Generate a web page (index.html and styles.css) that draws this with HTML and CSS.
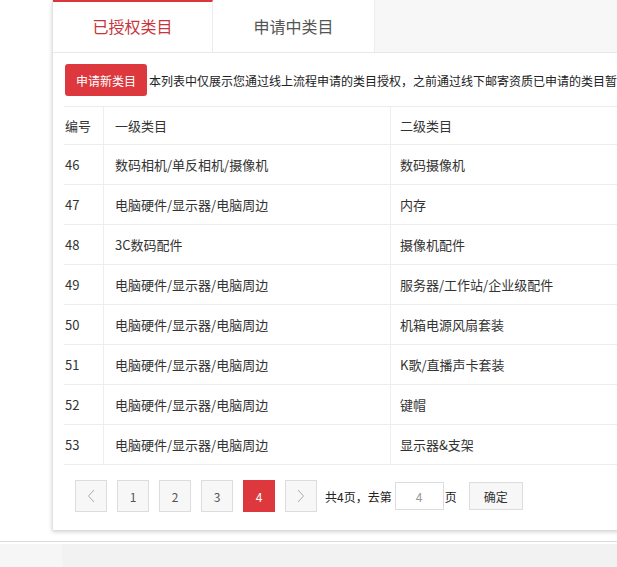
FILE: index.html
```html
<!DOCTYPE html>
<html lang="zh-CN">
<head>
    <meta charset="UTF-8">
    <title>已授权类目</title>
    <link rel="stylesheet" href="styles.css">
</head>
<body>

<div class="page">
    <div class="panel">
        <!-- Onglets -->
        <div class="tabs">
            <div class="tab active">已授权类目</div>
            <div class="tab">申请中类目</div>
            <div class="tab-fill"></div>
        </div>

        <div class="toolbar">
            <button class="btn-red">申请新类目</button>
            <span class="notice">本列表中仅展示您通过线上流程申请的类目授权，之前通过线下邮寄资质已申请的类目暂不在此展示</span>
        </div>

        <table class="cat-table">
            <thead>
                <tr>
                    <th class="col-id">编号</th>
                    <th class="col-first">一级类目</th>
                    <th class="col-second">二级类目</th>
                </tr>
            </thead>
            <tbody>
                <tr><td class="col-id">46</td><td class="col-first">数码相机/单反相机/摄像机</td><td class="col-second">数码摄像机</td></tr>
                <tr><td class="col-id">47</td><td class="col-first">电脑硬件/显示器/电脑周边</td><td class="col-second">内存</td></tr>
                <tr><td class="col-id">48</td><td class="col-first">3C数码配件</td><td class="col-second">摄像机配件</td></tr>
                <tr><td class="col-id">49</td><td class="col-first">电脑硬件/显示器/电脑周边</td><td class="col-second">服务器/工作站/企业级配件</td></tr>
                <tr><td class="col-id">50</td><td class="col-first">电脑硬件/显示器/电脑周边</td><td class="col-second">机箱电源风扇套装</td></tr>
                <tr><td class="col-id">51</td><td class="col-first">电脑硬件/显示器/电脑周边</td><td class="col-second">K歌/直播声卡套装</td></tr>
                <tr><td class="col-id">52</td><td class="col-first">电脑硬件/显示器/电脑周边</td><td class="col-second">键帽</td></tr>
                <tr><td class="col-id">53</td><td class="col-first">电脑硬件/显示器/电脑周边</td><td class="col-second">显示器&amp;支架</td></tr>
            </tbody>
        </table>

        <!-- Pagination -->
        <div class="pager">
            <a class="page-btn">
                <svg width="8" height="14" viewBox="0 0 8 14"><path d="M7 1 L1.5 7 L7 13" fill="none" stroke="#aaa" stroke-width="1"/></svg>
            </a>
            <a class="page-btn">1</a>
            <a class="page-btn">2</a>
            <a class="page-btn">3</a>
            <a class="page-btn current">4</a>
            <a class="page-btn next">
                <svg width="8" height="14" viewBox="0 0 8 14"><path d="M1 1 L6.5 7 L1 13" fill="none" stroke="#aaa" stroke-width="1"/></svg>
            </a>
            <span class="pager-text">共4页，去第</span>
            <input class="pager-input" type="text" value="4">
            <span class="pager-text">页</span>
            <button class="pager-ok">确定</button>
        </div>
    </div>
</div>

<div class="footer-bar">
    <div class="footer-side"></div>
</div>

</body>
</html>
```

FILE: styles.css
```css
body {
    margin: 0;
    background: #fff;
    font-family: "Noto Sans CJK SC", "Microsoft YaHei", sans-serif;
    color: #333;
    overflow: hidden;
}

.page {
    height: 541px;
    padding-left: 52px;
    border-bottom: 1px solid #dcdcdc;
    overflow: hidden;
}

.panel {
    width: 720px;
    border-left: 1px solid #e2e2e2;
    background: #fff;
    box-shadow: 0 2px 4px rgba(0, 0, 0, 0.18);
}

/* Onglets */
.tabs {
    display: flex;
    height: 52px;
    border-bottom: 1px solid #e8e8e8;
    background: #f7f7f7;
}

.tab {
    width: 160px;
    display: flex;
    align-items: center;
    justify-content: center;
    background: #fff;
    border-right: 1px solid #ececec;
    font-size: 16px;
    color: #555;
    box-sizing: border-box;
}

.tab.active {
    border-top: 2px solid #d9363e;
    color: #c9343b;
    padding-bottom: 2px;
}

.tab + .tab {
    width: 162px;
}

.tab-fill {
    flex: 1;
}

.toolbar {
    display: flex;
    align-items: center;
    gap: 2px;
    padding: 11px 0 10px 12px;
    white-space: nowrap;
}

.btn-red {
    width: 82px;
    height: 32px;
    border: none;
    border-radius: 3px;
    background: #dc383d;
    color: #fff;
    font-family: inherit;
    font-size: 12px;
    padding: 0;
}

.notice {
    font-size: 12px;
    color: #222;
}

/* Tableau */
.cat-table {
    margin-left: 11px;
    width: 680px;
    border-collapse: collapse;
    border-top: 1px solid #ececec;
    font-size: 13px;
}

.cat-table th,
.cat-table td {
    text-align: left;
    font-weight: normal;
    padding: 0;
    border-bottom: 1px solid #ededed;
    color: #333;
}

.cat-table th {
    height: 37px;
}

.cat-table td {
    height: 39px;
}

.col-id {
    width: 38px;
    padding-left: 1px !important;
}

.col-first {
    width: 275px;
    padding-left: 11px !important;
    border-left: 1px solid #eee;
}

.col-second {
    padding-left: 9px !important;
    border-left: 1px solid #eee;
}

/* Pagination */
.pager {
    display: flex;
    align-items: center;
    padding: 15px 0 18px 22px;
    font-size: 12px;
}

.page-btn {
    width: 32px;
    height: 32px;
    margin-right: 10px;
    box-sizing: border-box;
    border: 1px solid #dcdcdc;
    background: #f7f7f7;
    color: #555;
    display: flex;
    align-items: center;
    justify-content: center;
}

.page-btn.next {
    margin-right: 8px;
}

.page-btn.current {
    background: #dc383d;
    border-color: #dc383d;
    color: #fff;
}

.pager-text {
    color: #222;
}

.pager-input {
    width: 49px;
    height: 28px;
    margin: 0 1px 0 3px;
    box-sizing: border-box;
    border: 1px solid #ddd;
    text-align: center;
    color: #999;
    font-family: inherit;
    font-size: 12px;
}

.pager-ok {
    width: 54px;
    height: 28px;
    margin-left: 12px;
    border: 1px solid #ddd;
    background: #f7f7f7;
    color: #333;
    font-family: inherit;
    font-size: 12px;
    padding: 0;
}

.footer-bar {
    height: 30px;
    background: #f2f2f2;
    margin-top: 2px;
}

.footer-side {
    width: 62px;
    height: 100%;
    background: #f6f6f6;
}
```
